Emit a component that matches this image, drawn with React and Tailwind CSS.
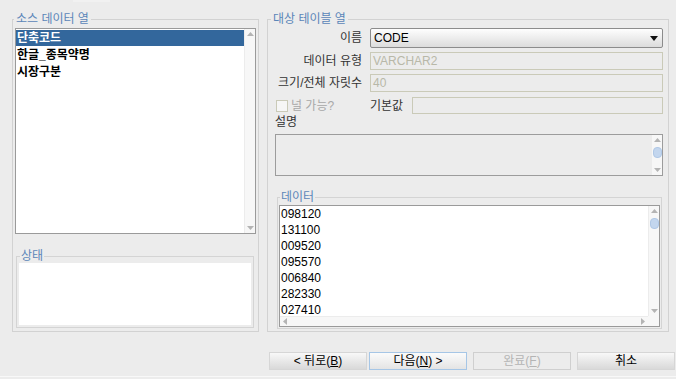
import React from "react";

const font = "font-['Liberation_Sans','Noto_Sans_CJK_KR',sans-serif]";

function Up({ c = "#b4b4b4" }) {
  return (
    <svg width="7" height="4" viewBox="0 0 7 4"><path d="M0 4 L3.5 0 L7 4Z" fill={c} /></svg>
  );
}
function Down({ c = "#b4b4b4" }) {
  return (
    <svg width="7" height="4" viewBox="0 0 7 4"><path d="M0 0 L3.5 4 L7 0Z" fill={c} /></svg>
  );
}
function Left({ c = "#b4b4b4" }) {
  return (
    <svg width="4" height="7" viewBox="0 0 4 7"><path d="M4 0 L0 3.5 L4 7Z" fill={c} /></svg>
  );
}
function Right({ c = "#b4b4b4" }) {
  return (
    <svg width="4" height="7" viewBox="0 0 4 7"><path d="M0 0 L4 3.5 L0 7Z" fill={c} /></svg>
  );
}

function VScroll({ thumb }) {
  return (
    <div className="w-[11px] flex flex-col items-center justify-between py-[3px] bg-[#f7f7f7] border-l border-[#ececec]">
      <div className="flex flex-col items-center gap-[5px]">
        <Up />
        {thumb ? <div className="w-[9px] h-[11px] rounded-[4px] bg-[#c3d6ee] border border-[#b0c8e6]" /> : null}
      </div>
      <Down />
    </div>
  );
}

export default function App() {
  const data = ["098120", "131100", "009520", "095570", "006840", "282330", "027410"];
  return (
    <div className={`w-[676px] h-[379px] bg-[#ececec] flex flex-col overflow-hidden text-[12px] text-[#333] ${font}`}>
      <div className="h-[2px] flex">
        <div className="ml-[73px] w-[37px] bg-[#f1f1f1]" />
      </div>
      <div className="flex items-start mt-[10px]">
        {/* Left group */}
        <fieldset className="ml-[12px] w-[247px] h-[320px] border border-[#d2d2d2] pl-[2px] pt-[2px]">
          <legend className="-ml-px px-[2px] leading-[14px] text-[#5b86b9]">소스 데이터 열</legend>
          <div className="w-[241px] h-[206px] border border-[#9a9a9a] bg-white flex">
            <div className="flex-1 flex flex-col pt-px font-bold text-black text-[12px]">
              <div className="h-[16px] leading-[16px] pl-px bg-[#33679c] text-white">단축코드</div>
              <div className="h-[17px] leading-[18px] pl-px">한글_종목약명</div>
              <div className="h-[17px] leading-[18px] pl-px">시장구분</div>
            </div>
            <VScroll />
          </div>
          <fieldset className="mt-[15px] ml-px w-[238px] h-[79px] border border-[#d4d4d4] px-[2px] pt-[0px]">
            <legend className="ml-[1px] px-[1px] leading-[14px] text-[#5b86b9]">상태</legend>
            <div className="w-[232px] h-[62px] bg-white" />
          </fieldset>
        </fieldset>

        {/* Right group */}
        <fieldset className="ml-[8px] w-[402px] h-[320px] border border-[#d2d2d2] pl-[7px] pr-[5px] pt-[2px]">
          <legend className="-ml-[4px] px-[2px] leading-[14px] text-[#5b86b9]">대상 테이블 열</legend>
          <div className="flex items-center h-[20px]">
            <div className="w-[87px] text-right">이름</div>
            <div className="ml-[8px] flex-1 h-[20px] rounded-[2px] border border-[#8c8c8c] bg-gradient-to-b from-[#fefefe] to-[#dcdcdc] flex items-center justify-between pl-[3px] pr-[4px] text-black">
              <span>CODE</span>
              <svg width="8" height="5" viewBox="0 0 8 5"><path d="M0 0 L8 0 L4 5Z" fill="#111" /></svg>
            </div>
          </div>
          <div className="flex items-center h-[18px] mt-[4px]">
            <div className="w-[87px] text-right">데이터 유형</div>
            <div className="ml-[8px] flex-1 h-[18px] border border-[#cacab8] flex items-center pl-[2px] text-[#b8b8a8]">VARCHAR2</div>
          </div>
          <div className="flex items-center h-[18px] mt-[4px]">
            <div className="w-[87px] text-right whitespace-nowrap">크기/전체 자릿수</div>
            <div className="ml-[8px] flex-1 h-[18px] border border-[#cacab8] flex items-center pl-[2px] text-[#b8b8a8]">40</div>
          </div>
          <div className="flex items-center h-[17px] mt-[5px]">
            <div className="ml-px w-[12px] h-[12px] border border-[#cacab8] bg-[#f6f6f6]" />
            <div className="ml-[3px] w-[79px] text-[#a8a8a8]">널 가능?</div>
            <div className="w-[42px]">기본값</div>
            <div className="flex-1 h-[17px] border border-[#cacab8]" />
          </div>
          <div className="h-[15px] leading-[15px] mt-[1px]">설명</div>
          <div className="mt-[4px] h-[42px] border border-[#9c9c9c] flex justify-end">
            <VScroll thumb />
          </div>
          <fieldset className="mt-[14px] ml-[2px] mr-px h-[139px] border border-[#d4d4d4] px-px pt-px">
            <legend className="ml-px px-[1px] leading-[14px] text-[#5b86b9]">데이터</legend>
            <div className="h-[122px] border border-[#9a9a9a] bg-white flex flex-col">
              <div className="h-[110px] flex">
                <div className="flex-1 overflow-hidden text-black">
                  {data.map((d) => (
                    <div key={d} className="h-[16px] leading-[16px] pl-px text-[12px] font-['Liberation_Sans',sans-serif]">{d}</div>
                  ))}
                </div>
                <VScroll thumb />
              </div>
              <div className="h-[10px] flex">
                <div className="flex-1 flex items-center justify-between px-[3px] bg-[#f7f7f7] border-t border-[#ececec]">
                  <Left />
                  <Right />
                </div>
                <div className="w-[11px] bg-[#f7f7f7]" />
              </div>
            </div>
          </fieldset>
        </fieldset>
      </div>

      {/* Buttons */}
      <div className="flex mt-[20px] pl-[269px] h-[18px]">
        <div className="w-[98px] h-[18px] border border-[#d6d6d6] bg-gradient-to-b from-[#f8f8f8] to-[#d9d9d9] flex items-center justify-center text-black">
          &lt; 뒤로(<span className="underline">B</span>)
        </div>
        <div className="ml-[2px] w-[98px] h-[18px] border border-[#a6c6e6] bg-gradient-to-b from-[#fbfbfb] to-[#e4e4e4] flex items-center justify-center text-black">
          다음(<span className="underline">N</span>) &gt;
        </div>
        <div className="ml-[6px] w-[98px] h-[18px] border border-[#cfcfcf] bg-[#ececec] flex items-center justify-center text-[#b4b4b4]">
          완료(<span className="underline">F</span>)
        </div>
        <div className="ml-[6px] w-[98px] h-[18px] border border-[#d6d6d6] bg-gradient-to-b from-[#f8f8f8] to-[#d9d9d9] flex items-center justify-center text-black">
          취소
        </div>
      </div>
      <div className="mt-[6px] h-px bg-[#f8f8f8]" />
    </div>
  );
}
